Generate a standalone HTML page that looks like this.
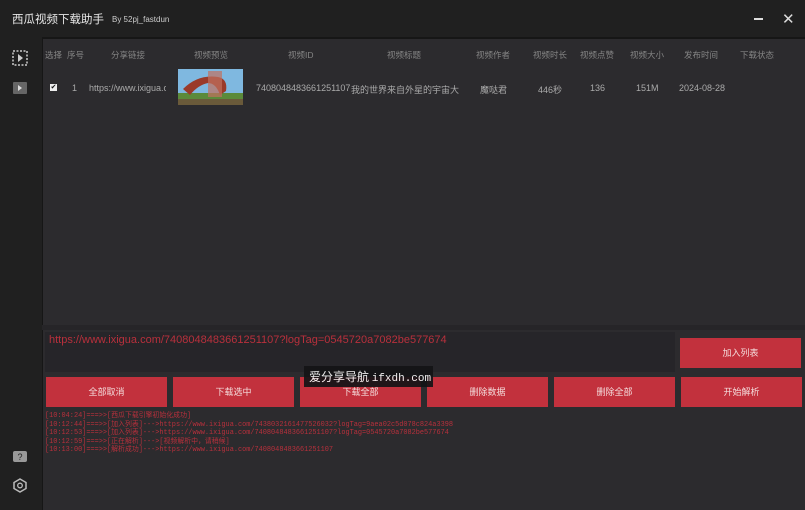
<!DOCTYPE html>
<html><head><meta charset="utf-8"><style>
*{margin:0;padding:0;box-sizing:border-box}
body{width:805px;height:510px;background:#202020;font-family:"Liberation Sans","Noto Sans CJK SC",sans-serif;position:relative;overflow:hidden;color:#bbb}
.abs{position:absolute}
.title{left:12px;top:11px;font-size:11.5px;color:#e8e8e8}
.by{left:112px;top:15px;font-size:8px;color:#ccc}
.main{left:42px;top:37px;width:763px;height:473px;background:#2c2b2e;border-left:1px solid #161616;border-top:2px solid #161616}
.hd{top:49px;font-size:8.5px;color:#858585;white-space:nowrap}
.row{top:83px;font-size:9px;color:#aaa;white-space:nowrap}
.inp{left:45px;top:332px;width:630px;height:40px;background:#262529}
.btn{background:#c2313d;color:#f4dcdc;font-size:9px;text-align:center;line-height:30px;height:30px;width:121px;top:377px}
.log{left:45px;top:412px;font-family:"Liberation Mono","Noto Sans CJK SC",monospace;font-size:6.9px;line-height:8.5px;color:#b8303c;white-space:pre}
</style></head><body>
<div class="abs title">西瓜视频下载助手</div>
<div class="abs by">By 52pj_fastdun</div>
<div class="abs" style="left:754px;top:18px;width:9px;height:1.5px;background:#ddd"></div>
<div class="abs" style="left:782px;top:10px;font-size:15px;color:#ddd">✕</div>
<div class="main abs"></div>
<div class="abs" style="left:42px;top:325px;width:763px;height:5px;background:#262528"></div>
<svg class="abs" style="left:12px;top:50px" width="16" height="16"><rect x="1" y="1" width="14" height="14" fill="none" stroke="#ccc" stroke-width="1.5" stroke-dasharray="2 1.5"/><polygon points="6,4 11,8 6,12" fill="#ccc"/></svg>
<svg class="abs" style="left:12px;top:81px" width="16" height="14"><rect x="1" y="1" width="14" height="12" rx="1" fill="#666"/><polygon points="6,4 10,7 6,10" fill="#ddd"/></svg>
<svg class="abs" style="left:13px;top:451px" width="14" height="14"><rect x="0" y="0" width="14" height="11" rx="2" fill="#999"/><text x="7" y="9" font-size="9" text-anchor="middle" fill="#222">?</text></svg>
<svg class="abs" style="left:13px;top:478px" width="14" height="15"><polygon points="7,1 13,4.5 13,10.5 7,14 1,10.5 1,4.5" fill="none" stroke="#bbb" stroke-width="1.5"/><circle cx="7" cy="7.5" r="2.3" fill="none" stroke="#bbb" stroke-width="1.3"/></svg>
<div class="abs hd" style="left:45px">选择</div>
<div class="abs hd" style="left:67px">序号</div>
<div class="abs hd" style="left:111px">分享链接</div>
<div class="abs hd" style="left:194px">视频预览</div>
<div class="abs hd" style="left:288px">视频ID</div>
<div class="abs hd" style="left:387px">视频标题</div>
<div class="abs hd" style="left:476px">视频作者</div>
<div class="abs hd" style="left:533px">视频时长</div>
<div class="abs hd" style="left:580px">视频点赞</div>
<div class="abs hd" style="left:630px">视频大小</div>
<div class="abs hd" style="left:684px">发布时间</div>
<div class="abs hd" style="left:740px">下载状态</div>
<div class="abs" style="left:50px;top:84px;width:7px;height:7px;background:#eee;font-size:7px;color:#111;line-height:7px;text-align:center">✔</div>
<div class="abs row" style="left:72px">1</div>
<div class="abs row" style="left:89px;width:77px;overflow:hidden">https://www.ixigua.com</div>
<svg class="abs" style="left:178px;top:69px" width="65" height="36"><rect width="65" height="36" fill="#7fb8e0"/><rect y="24" width="65" height="12" fill="#5b8a3a"/><path d="M5 20 Q20 5 40 8 Q50 10 48 22 L42 26 Q38 14 30 14 Q20 16 12 26Z" fill="#9a3a2a"/><rect x="30" y="2" width="14" height="26" fill="#c07060" opacity=".7"/><rect x="0" y="30" width="65" height="6" fill="#6a5a3a"/></svg>
<div class="abs row" style="left:256px">7408048483661251107</div>
<div class="abs row" style="left:351px;width:108px;overflow:hidden">我的世界来自外星的宇宙大金刚</div>
<div class="abs row" style="left:480px">魔哒君</div>
<div class="abs row" style="left:538px">446秒</div>
<div class="abs row" style="left:590px">136</div>
<div class="abs row" style="left:636px">151M</div>
<div class="abs row" style="left:679px">2024-08-28</div>
<div class="abs inp"></div>
<div class="abs" style="left:49px;top:334px;font-size:11px;color:#b8303c">https://www.ixigua.com/7408048483661251107?logTag=0545720a7082be577674</div>
<div class="abs btn" style="left:680px;top:338px;height:30px;width:121px">加入列表</div>
<div class="abs btn" style="left:46px">全部取消</div>
<div class="abs btn" style="left:173px">下载选中</div>
<div class="abs btn" style="left:300px">下载全部</div>
<div class="abs btn" style="left:427px">删除数据</div>
<div class="abs btn" style="left:554px">删除全部</div>
<div class="abs btn" style="left:681px">开始解析</div>
<div class="abs" style="left:304px;top:366px;width:129px;height:21px;background:#141416;opacity:.92;color:#fff;font-size:12px;line-height:21px;padding-left:5px;font-family:'Noto Sans CJK SC','Liberation Mono',monospace">爱分享导航 <span style="font-family:'Liberation Mono',monospace;font-size:11px">ifxdh.com</span></div>
<div class="abs log">[10:04:24]===>>[西瓜下载引擎初始化成功]
[10:12:44]===>>[加入列表]--->https://www.ixigua.com/7438032161477526032?logTag=9aea02c5d078c824a3398
[10:12:53]===>>[加入列表]--->https://www.ixigua.com/7408048483661251107?logTag=0545720a7082be577674
[10:12:59]===>>[正在解析]--->[视频解析中，请稍候]
[10:13:00]===>>[解析成功]--->https://www.ixigua.com/7408048483661251107</div>
</body></html>
